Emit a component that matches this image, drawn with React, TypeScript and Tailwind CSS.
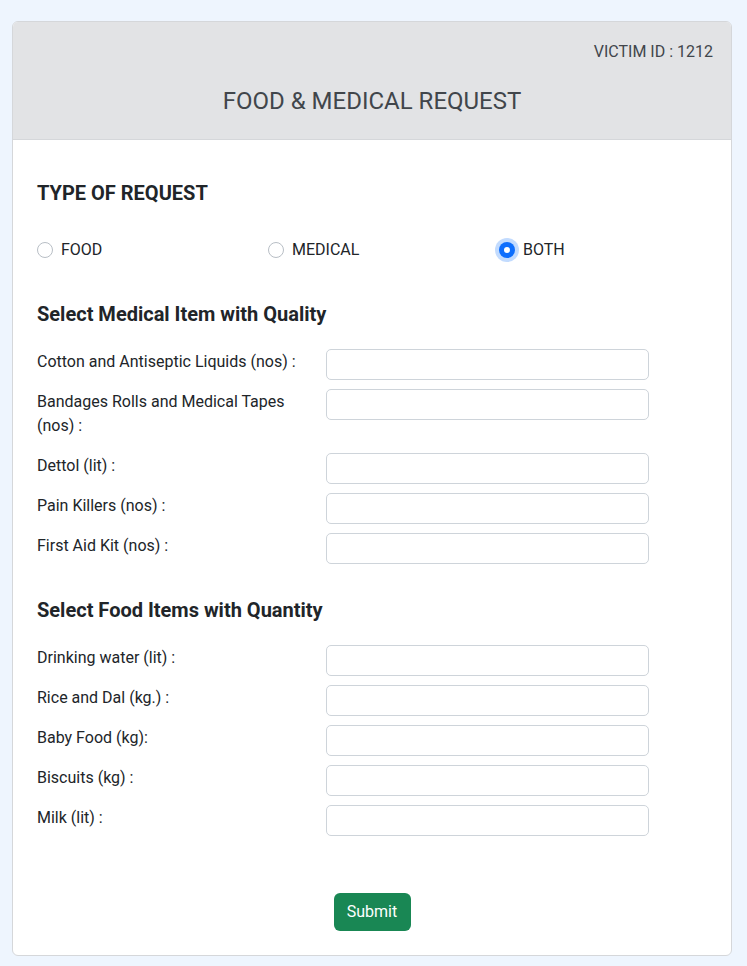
import { useState } from "react"

const medicalItems = [
   "Cotton and Antiseptic Liquids (nos) :",
   "Bandages Rolls and Medical Tapes (nos) :",
   "Dettol (lit) :",
   "Pain Killers (nos) :",
   "First Aid Kit (nos) :",
]

const foodItems = [
   "Drinking water (lit) :",
   "Rice and Dal (kg.) :",
   "Baby Food (kg):",
   "Biscuits (kg) :",
   "Milk (lit) :",
]

function ItemRow({ label }: { label: string }) {
   return (
      <div className="flex items-start">
         <label className="w-[289px] pr-4 pt-[1px] mb-[15px] leading-6 text-[16px] text-[#212529]">{label}</label>
         <input
            type="text"
            className="w-[323px] h-[31px] rounded-[5px] border border-[#ced4da] bg-white px-3 outline-none"
         />
      </div>
   )
}

function Radio({ label, checked, onChange }: { label: string; checked: boolean; onChange: () => void }) {
   return (
      <label className="w-[231px] shrink-0 flex items-center gap-2 cursor-pointer" onClick={onChange}>
         {checked ? (
            <span className="w-4 h-4 rounded-full bg-[#0d6efd] flex items-center justify-center shadow-[0_0_0_4px_rgba(13,110,253,0.25)]">
               <span className="w-[6px] h-[6px] rounded-full bg-white"></span>
            </span>
         ) : (
            <span className="w-4 h-4 rounded-full border border-[#b8bec5] bg-white"></span>
         )}
         <span className="leading-6 text-[16px] text-[#212529]">{label}</span>
      </label>
   )
}

export default function App() {
   const [type, setType] = useState("BOTH")

   return (
      <div className="min-h-[966px] bg-[#eef5fe] pt-[21px] pb-[11px] font-['Roboto',sans-serif]">
         <div className="ml-[12px] w-[720px] bg-white border border-[#d5d7da] rounded-[6px] overflow-hidden">
            <div className="bg-[#e2e3e5] border-b border-[#d5d7da] px-[18px] pt-[18px] pb-[23px] text-[#41464b]">
               <div className="text-right leading-6 text-[16px]">VICTIM ID : 1212</div>
               <h4 className="mt-[23px] text-center text-[24px] leading-[29px]">FOOD &amp; MEDICAL REQUEST</h4>
            </div>
            <div className="px-6 pt-[41px] pb-6 text-[#212529]">
               <h5 className="text-[20px] font-bold leading-6">TYPE OF REQUEST</h5>
               <div className="flex mt-[33px]">
                  {["FOOD", "MEDICAL", "BOTH"].map(t => (
                     <Radio key={t} label={t} checked={type === t} onChange={() => setType(t)} />
                  ))}
               </div>
               <h5 className="mt-[40px] mb-[23px] text-[20px] font-bold leading-6">Select Medical Item with Quality</h5>
               {medicalItems.map(item => <ItemRow key={item} label={item} />)}
               <h5 className="mt-[25px] mb-[23px] text-[20px] font-bold leading-6">Select Food Items with Quantity</h5>
               {foodItems.map(item => <ItemRow key={item} label={item} />)}
               <div className="flex justify-center mt-[48px]">
                  <button className="bg-[#198754] text-white rounded-[6px] w-[77px] h-[38px] text-[16px]">Submit</button>
               </div>
            </div>
         </div>
      </div>
   )
}
